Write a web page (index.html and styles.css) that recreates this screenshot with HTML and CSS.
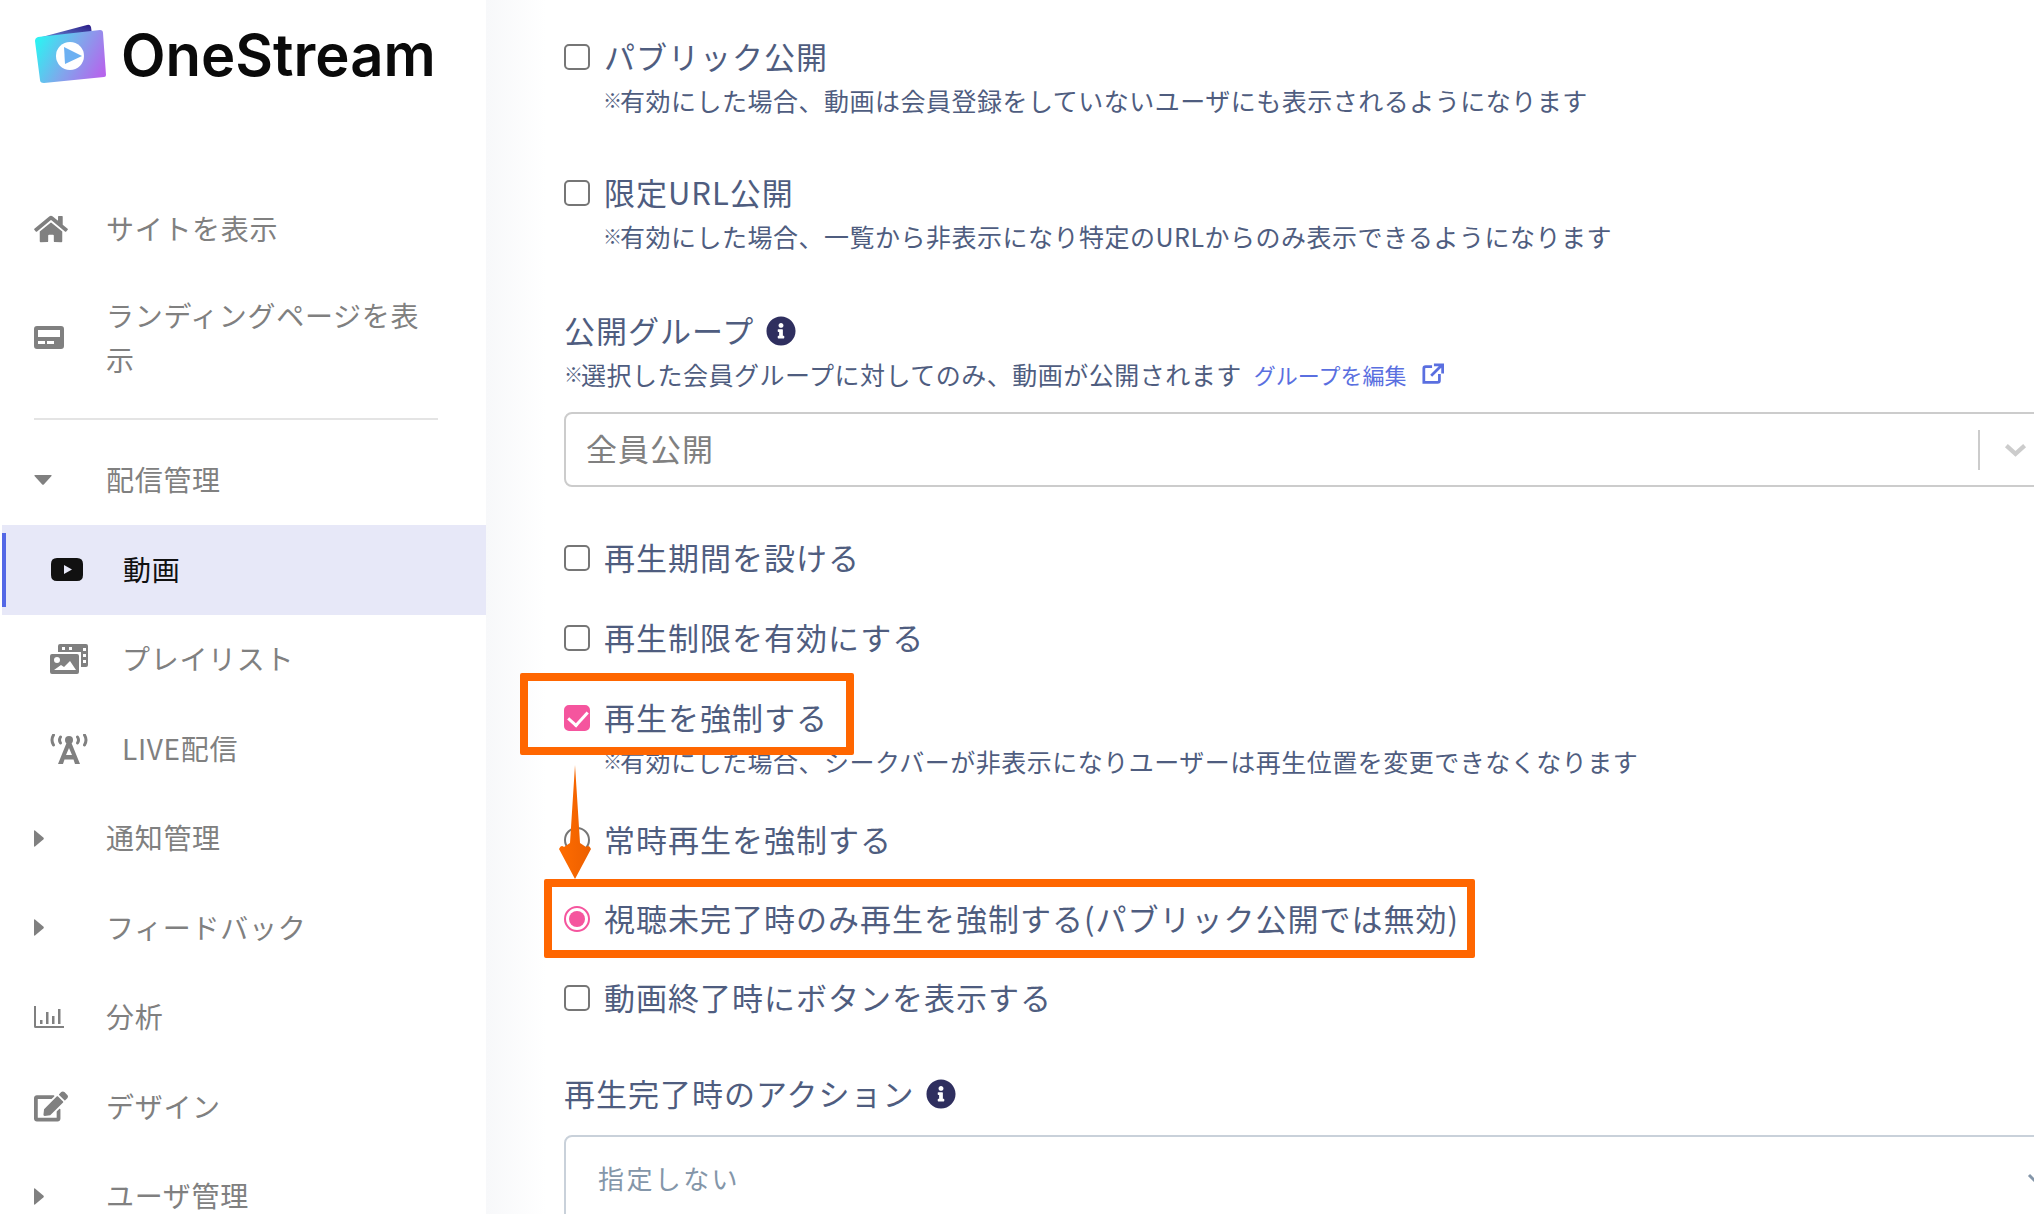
FILE: index.html
```html
<!DOCTYPE html>
<html lang="ja">
<head>
    <meta charset="utf-8">
    <title>OneStream</title>
    <link rel="stylesheet" href="styles.css">
</head>
<body>
    <div class="page">
        <aside class="sidebar">
            <div class="logo">
                <svg class="logo-mark" viewBox="0 0 72 62">
                    <defs>
                        <linearGradient id="card" x1="0" y1="0.3" x2="1" y2="0.7">
                            <stop offset="0" stop-color="#2ff0f2"/>
                            <stop offset="0.5" stop-color="#7fa8ec"/>
                            <stop offset="1" stop-color="#b565ec"/>
                        </linearGradient>
                        <linearGradient id="flap" x1="0" y1="1" x2="1" y2="0">
                            <stop offset="0" stop-color="#6a8fd8"/>
                            <stop offset="1" stop-color="#2a1a86"/>
                        </linearGradient>
                    </defs>
                    <path d="M4 14 L53 1 Q56 0 57 3 L58 10 Z" fill="url(#flap)"/>
                    <path d="M4 13 L66 6 Q69 6 69 9 L72 51 Q72 53 70 53 L10 59 Q6 59 6 56 L1 17 Q1 14 4 13 Z" fill="url(#card)"/>
                    <circle cx="36" cy="32" r="14" fill="#fff"/>
                    <path d="M30 23 L48 32 L31 40 Z" fill="#6cb0f2"/>
                </svg>
                <span class="logo-text">OneStream</span>
            </div>

            <nav class="nav">
                <a class="nav-item">
                    <span class="nav-icon">
                        <svg class="icon-home" viewBox="0 0 576 512"><path d="M280.37 148.26L96 300.11V464a16 16 0 0 0 16 16l112.06-.29a16 16 0 0 0 15.92-16V368a16 16 0 0 1 16-16h64a16 16 0 0 1 16 16v95.64a16 16 0 0 0 16 16.05L464 480a16 16 0 0 0 16-16V300L295.67 148.26a12.19 12.19 0 0 0-15.3 0zM571.6 251.47L488 182.56V44.05a12 12 0 0 0-12-12h-56a12 12 0 0 0-12 12v72.61L318.47 43a48 48 0 0 0-61 0L4.34 251.47a12 12 0 0 0-1.6 16.9l25.5 31A12 12 0 0 0 45.15 301l235.22-193.74a12.19 12.19 0 0 1 15.3 0L530.9 301a12 12 0 0 0 16.9-1.6l25.5-31a12 12 0 0 0-1.7-16.93z"/></svg>
                    </span>
                    <span class="nav-text">サイトを表示</span>
                </a>
                <a class="nav-item tall">
                    <span class="nav-icon">
                        <svg class="icon-pager" viewBox="0 0 30 23"><path fill-rule="evenodd" d="M3 0h24a3 3 0 0 1 3 3v17a3 3 0 0 1-3 3H3a3 3 0 0 1-3-3V3a3 3 0 0 1 3-3zM4 4v7h22V4zM4 15v3h7v-3zM13 15v3h7v-3z"/></svg>
                    </span>
                    <span class="nav-text nav-wrap">ランディングページを表示</span>
                </a>
                <div class="nav-divider"></div>
                <a class="nav-item">
                    <span class="nav-icon">
                        <svg class="icon-caret-down" viewBox="0 0 18 10"><path d="M1 0h16q1 0 .5 1L10 9.3q-1 1-2 0L.5 1Q0 0 1 0z"/></svg>
                    </span>
                    <span class="nav-text">配信管理</span>
                </a>
                <a class="nav-item sub active">
                    <span class="nav-icon">
                        <svg class="icon-video" viewBox="0 0 32 23"><path fill-rule="evenodd" d="M6 0h20q6 0 6 6v11q0 6-6 6H6q-6 0-6-6V6q0-6 6-6zM13 7v9l8-4.500z"/></svg>
                    </span>
                    <span class="nav-text">動画</span>
                </a>
                <a class="nav-item sub">
                    <span class="nav-icon">
                        <svg class="icon-playlist" viewBox="0 0 38 30"><path fill-rule="evenodd" d="M10 0h26a2 2 0 0 1 2 2v19a2 2 0 0 1-2 2h-5V8H8V2a2 2 0 0 1 2-2zM12 3v3h3V3zM19 3v3h3V3zM33 4v3h3V4zM33 10v3h3v-3zM33 16v3h3v-3z"/><path fill-rule="evenodd" d="M2 10h25a2 2 0 0 1 2 2v16a2 2 0 0 1-2 2H2a2 2 0 0 1-2-2V12a2 2 0 0 1 2-2zM7 13a3 3 0 1 0 0 6 3 3 0 0 0 0-6zM4 26h22l-6-9-6 6-3-2z"/></svg>
                    </span>
                    <span class="nav-text">プレイリスト</span>
                </a>
                <a class="nav-item sub">
                    <span class="nav-icon">
                        <svg class="icon-tower" viewBox="0 0 38 30"><circle cx="19" cy="6" r="4"/><path d="M16.500 9h5L30 30h-5l-1.500-4.500h-9L13 30H8zM16 21h6l-3-7z"/><path d="M3.500 1q-3 5 0 10M34.500 1q3 5 0 10M10.500 3q-2 3 0 6M27.500 3q2 3 0 6" fill="none" stroke="#808080" stroke-width="3" stroke-linecap="round"/></svg>
                    </span>
                    <span class="nav-text">LIVE配信</span>
                </a>
                <a class="nav-item">
                    <span class="nav-icon"><svg class="icon-caret" viewBox="0 0 10 17"><path d="M0 1q0-1 1-.5L9.3 7.5q1 1 0 2L1 16.500q-1 .5-1-.5z"/></svg></span>
                    <span class="nav-text">通知管理</span>
                </a>
                <a class="nav-item">
                    <span class="nav-icon"><svg class="icon-caret" viewBox="0 0 10 17"><path d="M0 1q0-1 1-.5L9.3 7.5q1 1 0 2L1 16.500q-1 .5-1-.5z"/></svg></span>
                    <span class="nav-text">フィードバック</span>
                </a>
                <a class="nav-item">
                    <span class="nav-icon">
                        <svg class="icon-chart" viewBox="0 0 30 22"><path d="M0 0h2v20h28v2H1.500Q0 22 0 20.500zM6 14h2.500v4H6zM12 6h2.500v12H12zM18 10h2.500v8H18zM24 3h2.500v15H24z"/></svg>
                    </span>
                    <span class="nav-text">分析</span>
                </a>
                <a class="nav-item">
                    <span class="nav-icon">
                        <svg class="icon-edit" viewBox="0 0 576 512"><path d="M402.6 83.2l90.2 90.2c3.8 3.8 3.8 10 0 13.8L274.4 405.6l-92.8 10.3c-12.4 1.4-22.9-9.1-21.5-21.5l10.3-92.8L388.8 83.2c3.8-3.8 10-3.8 13.8 0zm162-22.9l-48.8-48.8c-15.2-15.2-39.9-15.2-55.2 0l-35.4 35.4c-3.8 3.8-3.8 10 0 13.8l90.2 90.2c3.8 3.8 10 3.8 13.8 0l35.4-35.4c15.2-15.3 15.2-40 0-55.2zM384 346.2V448H64V128h229.8c3.2 0 6.2-1.3 8.5-3.5l40-40c7.6-7.6 2.2-20.5-8.5-20.5H48C21.5 64 0 85.5 0 112v352c0 26.5 21.5 48 48 48h352c26.5 0 48-21.5 48-48V306.2c0-10.7-12.9-16-20.5-8.5l-40 40c-2.2 2.3-3.5 5.3-3.5 8.5z"/></svg>
                    </span>
                    <span class="nav-text">デザイン</span>
                </a>
                <a class="nav-item">
                    <span class="nav-icon"><svg class="icon-caret" viewBox="0 0 10 17"><path d="M0 1q0-1 1-.5L9.3 7.5q1 1 0 2L1 16.500q-1 .5-1-.5z"/></svg></span>
                    <span class="nav-text">ユーザ管理</span>
                </a>
            </nav>
        </aside>

        <main class="main">
            <label class="check">
                <input type="checkbox">
                <span class="label-text">パブリック公開</span>
            </label>
            <p class="note indent"><span class="kome">※</span>有効にした場合、動画は会員登録をしていないユーザにも表示されるようになります</p>

            <label class="check mt-48">
                <input type="checkbox">
                <span class="label-text">限定URL公開</span>
            </label>
            <p class="note indent"><span class="kome">※</span>有効にした場合、一覧から非表示になり特定のURLからのみ表示できるようになります</p>

            <div class="field-label mt-50">
                <span class="label-text">公開グループ</span>
                <svg class="icon-info" viewBox="0 0 512 512"><path d="M256 8C119.043 8 8 119.083 8 256c0 136.997 111.043 248 248 248s248-111.003 248-248C504 119.083 392.957 8 256 8zm0 110c23.196 0 42 18.804 42 42s-18.804 42-42 42-42-18.804-42-42 18.804-42 42-42zm56 254c0 6.627-5.373 12-12 12h-88c-6.627 0-12-5.373-12-12v-24c0-6.627 5.373-12 12-12h12v-64h-12c-6.627 0-12-5.373-12-12v-24c0-6.627 5.373-12 12-12h64c6.627 0 12 5.373 12 12v100h12c6.627 0 12 5.373 12 12v24z"/></svg>
            </div>
            <p class="note">
                <span class="kome">※</span>選択した会員グループに対してのみ、動画が公開されます
                <a class="edit-link">グループを編集
                    <svg class="icon-external" viewBox="0 0 24 24"><path d="M11 4H4a2 2 0 0 0-2 2v15h15a2 2 0 0 0 2-2v-7M10 14 21 3M13 2h9.500v9.500" fill="none" stroke="#5a6fe0" stroke-width="3"/></svg>
                </a>
            </p>
            <div class="select select-group">
                <span class="select-text">全員公開</span>
                <span class="select-arrow">
                    <svg viewBox="0 0 24 14"><path d="M2.500 2.500 12 11l9.500-8.500" fill="none" stroke="#cccccc" stroke-width="4.500"/></svg>
                </span>
            </div>

            <label class="check mt-49">
                <input type="checkbox">
                <span class="label-text">再生期間を設ける</span>
            </label>
            <label class="check mt-36">
                <input type="checkbox">
                <span class="label-text">再生制限を有効にする</span>
            </label>
            <label class="check mt-36">
                <input type="checkbox" checked>
                <span class="label-text">再生を強制する</span>
            </label>
            <p class="note indent"><span class="kome">※</span>有効にした場合、シークバーが非表示になりユーザーは再生位置を変更できなくなります</p>

            <label class="check mt-34">
                <input type="radio" name="force">
                <span class="label-text">常時再生を強制する</span>
            </label>
            <label class="check mt-35">
                <input type="radio" name="force" checked>
                <span class="label-text">視聴未完了時のみ再生を強制する(パブリック公開では無効)</span>
            </label>
            <label class="check mt-35">
                <input type="checkbox">
                <span class="label-text">動画終了時にボタンを表示する</span>
            </label>

            <div class="field-label mt-52">
                <span class="label-text">再生完了時のアクション</span>
                <svg class="icon-info" viewBox="0 0 512 512"><path d="M256 8C119.043 8 8 119.083 8 256c0 136.997 111.043 248 248 248s248-111.003 248-248C504 119.083 392.957 8 256 8zm0 110c23.196 0 42 18.804 42 42s-18.804 42-42 42-42-18.804-42-42 18.804-42 42-42zm56 254c0 6.627-5.373 12-12 12h-88c-6.627 0-12-5.373-12-12v-24c0-6.627 5.373-12 12-12h12v-64h-12c-6.627 0-12-5.373-12-12v-24c0-6.627 5.373-12 12-12h64c6.627 0 12 5.373 12 12v100h12c6.627 0 12 5.373 12 12v24z"/></svg>
            </div>
            <div class="select select-action">
                <span class="select-text">指定しない</span>
                <svg class="action-arrow" viewBox="0 0 24 14"><path d="M2 2 12 12 22 2" fill="none" stroke="#8496a9" stroke-width="3"/></svg>
            </div>

            <!-- annotation drawn over the form -->
            <div class="mark mark-force"></div>
            <div class="mark mark-radio"></div>
            <svg class="mark-arrow" viewBox="0 0 32 114">
                <defs>
                    <linearGradient id="arrow" x1="0" y1="0" x2="1" y2="0">
                        <stop offset="0" stop-color="#ff6c00"/>
                        <stop offset="1" stop-color="#ec5f00"/>
                    </linearGradient>
                </defs>
                <path d="M16 0 21 78 27 82 Q30 79 32 84 L16 114 L0 84 Q2 79 5 82 L11 78Z" fill="url(#arrow)"/>
            </svg>
        </main>
    </div>
</body>
</html>
```

FILE: styles.css
```css
* {
    box-sizing: border-box;
}
html, body {
    margin: 0;
    height: 100%;
    overflow: hidden;
}
body {
    font-family: "Noto Sans CJK JP", "Noto Sans", sans-serif;
    background: #fff;
}
svg {
    display: block;
}
.page {
    display: flex;
    height: 1214px;
    overflow: hidden;
}

/* sidebar */
.sidebar {
    width: 486px;
    flex: none;
    background: #fff;
}
.logo {
    display: flex;
    align-items: center;
    gap: 15px;
    height: 184px;
    padding: 25px 0 100px 34px;
}
.logo-mark {
    width: 72px;
    height: 62px;
}
.logo-text {
    font-family: "Inter", sans-serif;
    font-weight: 600;
    font-size: 58px;
    letter-spacing: 0;
    color: #0a0a0a;
}
.nav-item {
    display: flex;
    align-items: center;
    min-height: 89.5px;
    padding-left: 34px;
    font-size: 28px;
    letter-spacing: 0.7px;
    line-height: 44px;
    color: #808080;
}
.nav-item.tall {
    padding: 19px 0 19px 34px;
}
.nav-item svg {
    fill: #808080;
}
.nav-icon {
    width: 72px;
    flex: none;
}
.nav-text {
    padding-bottom: 2px;
}
.nav-wrap {
    width: 330px;
}
.nav-divider {
    height: 2px;
    margin: 16px 48px 16px 34px;
    background: #e4e4e4;
}
.nav-item.sub {
    padding-left: 50px;
}
.nav-item.active {
    position: relative;
    margin-left: 2px;
    padding-left: 49px;
    background: #e7e8f8;
    color: #111;
}
.nav-item.active::before {
    content: "";
    position: absolute;
    left: 0;
    top: 8px;
    bottom: 8px;
    width: 4px;
    background: #5468e6;
}
.nav-item.active svg {
    fill: #111;
}
.icon-home { width: 34px; height: 30px; }
.icon-pager { width: 30px; height: 23px; }
.icon-caret-down { width: 18px; height: 10px; }
.icon-caret { width: 10px; height: 17px; }
.icon-video { width: 32px; height: 23px; }
.icon-playlist, .icon-tower { width: 38px; height: 30px; }
.icon-chart { width: 30px; height: 22px; }
.icon-edit { width: 34px; height: 31px; }

/* form */
.main {
    position: relative;
    flex: 1;
    min-width: 0;
    padding: 35px 0 0 78px;
    background: linear-gradient(90deg, #f7f8fa, #fff 60px);
    color: #4f5d7f;
}
.check, .field-label {
    display: flex;
    align-items: center;
    height: 44px;
    font-size: 31px;
    letter-spacing: 1px;
    line-height: 44px;
    white-space: nowrap;
}
.check {
    gap: 14px;
}
.field-label {
    gap: 12px;
}
.label-text {
    padding-bottom: 3px;
}
.check input {
    appearance: none;
    position: relative;
    flex: none;
    width: 26px;
    height: 26px;
    margin: 0;
    border: 2px solid #767676;
    border-radius: 5px;
    background: #fff;
}
.check input[type="checkbox"]:checked {
    background: #f5559e;
    border-color: #f5559e;
}
.check input[type="checkbox"]:checked::after {
    content: "";
    position: absolute;
    left: 6px;
    top: 0;
    width: 9px;
    height: 16px;
    border: solid #fff;
    border-width: 0 3px 3px 0;
    transform: rotate(42deg);
}
.check input[type="radio"] {
    border-radius: 50%;
}
.check input[type="radio"]:checked {
    border-color: #f5559e;
}
.check input[type="radio"]:checked::after {
    content: "";
    position: absolute;
    inset: 3px;
    border-radius: 50%;
    background: #f5559e;
}
.note {
    display: flex;
    align-items: center;
    height: 44px;
    margin: 0;
    padding-bottom: 2px;
    font-size: 25px;
    letter-spacing: 0.5px;
    line-height: 44px;
    white-space: nowrap;
}
.note.indent {
    padding-left: 39px;
}
.kome {
    margin-right: -2px;
    font-size: 19px;
    font-weight: 700;
    letter-spacing: 0;
}
.edit-link {
    display: flex;
    align-items: center;
    gap: 16px;
    margin-left: 12px;
    font-size: 22px;
    letter-spacing: 0;
    color: #5a6fe0;
}
.icon-external {
    width: 22px;
    height: 22px;
}
.icon-info {
    width: 30px;
    height: 30px;
    flex: none;
    fill: #2f2f5f;
}
.select {
    display: flex;
    align-items: center;
    justify-content: space-between;
    width: 1600px;
    height: 75px;
    background: #fff;
    border: 2px solid #cccccc;
    border-radius: 8px;
}
.select-text {
    padding-bottom: 5px;
}
.select-group {
    margin-top: 15px;
    padding-left: 20px;
    font-size: 31px;
    letter-spacing: 1px;
    color: #808080;
}
.select-arrow {
    display: flex;
    align-items: center;
    width: 184px;
    height: 40px;
    padding-left: 24px;
    border-left: 2px solid #cccccc;
}
.select-arrow svg {
    width: 23px;
    height: 14px;
}
.select-action {
    height: 90px;
    margin-top: 19px;
    padding-left: 32px;
    font-size: 26px;
    letter-spacing: 2.4px;
    border-color: #c9d1da;
    color: #8496a9;
}
.action-arrow {
    width: 24px;
    height: 14px;
    margin-right: 111px;
}
.mt-34 { margin-top: 34px; }
.mt-35 { margin-top: 35px; }
.mt-36 { margin-top: 36px; }
.mt-48 { margin-top: 48px; }
.mt-49 { margin-top: 49px; }
.mt-50 { margin-top: 50px; }
.mt-52 { margin-top: 52px; }

/* annotation */
.mark {
    position: absolute;
    border: 8px solid #ff6600;
    border-radius: 2px;
}
.mark-force {
    left: 34px;
    top: 673px;
    width: 334px;
    height: 82px;
}
.mark-radio {
    left: 58px;
    top: 879px;
    width: 931px;
    height: 79px;
}
.mark-arrow {
    position: absolute;
    left: 73px;
    top: 765px;
    width: 32px;
    height: 114px;
}
```
